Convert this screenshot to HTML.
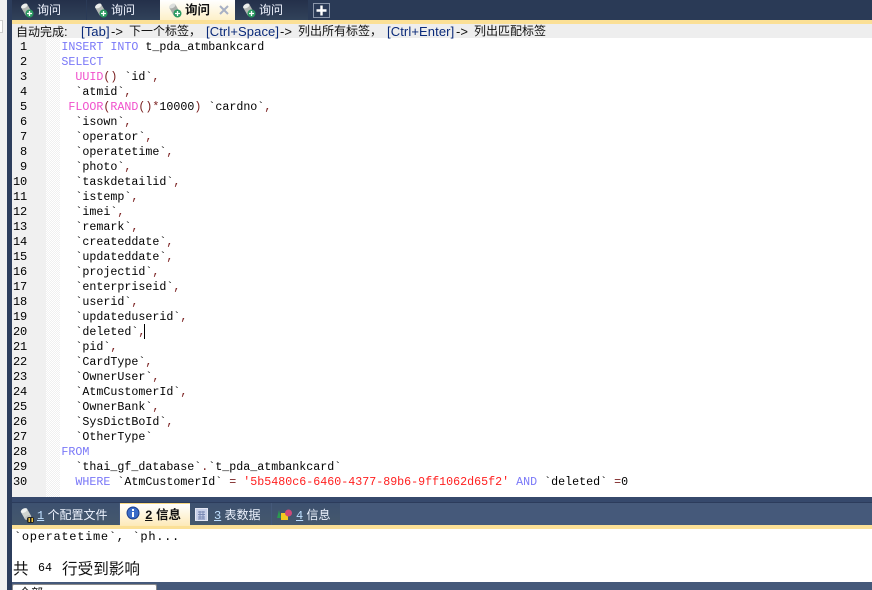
<!DOCTYPE html>
<html><head><meta charset="utf-8"><style>
html,body{margin:0;padding:0}
body{width:872px;height:590px;position:relative;overflow:hidden;background:#fff;font-family:"Liberation Sans","Noto Sans CJK SC",sans-serif}
div{position:absolute;box-sizing:border-box}
.t{white-space:pre;font-size:12px;line-height:16px}
.st{top:24px;white-space:pre;font-size:12px;line-height:15px;color:#111}
.l{font-size:13px;letter-spacing:.1px;color:#0a2a7a}
.d{font-size:13px;color:#111}
.n{left:0;width:27px;text-align:right;font:12px/15px "Liberation Mono",monospace;color:#000;height:15px;letter-spacing:-.2px}
.c{left:61.4px;font:11.67px/15px "Liberation Mono",monospace;color:#000;white-space:pre;height:15px}
.k{color:#7a78f8}.f{color:#f050cc}.p{color:#7a2020}.s{color:#ff1f1f}
.tab{top:0;height:20px;background:linear-gradient(#24304a,#31425a);}
.bt{top:503px;height:22px;background:linear-gradient(#3d5170,#45586c);}
svg{position:absolute}
</style></head><body>
<div style="left:0;top:0;width:7px;height:590px;background:#f0f0f0"></div>
<div style="left:0;top:20px;width:3px;height:13px;background:#fff;border:1px solid #ccc;border-left:0"></div>
<div style="left:7px;top:0;width:5px;height:590px;background:#2c3d5c"></div>
<div style="left:12px;top:0;width:860px;height:20px;background:#2a3a56"></div>
<div class="tab" style="left:12px;width:74px"></div>
<div class="tab" style="left:87px;width:73px"></div>
<div class="tab" style="left:235px;width:73px"></div>
<div style="left:160px;top:0;width:75px;height:20px;background:linear-gradient(#fff,#fdf0c8)"></div>
<svg style="left:20px;top:3px" width="15" height="15"><g transform="rotate(-30 6 6)"><rect x="2.500" y="2.500" width="7" height="8.500" fill="#b4b8b4"/><ellipse cx="6" cy="2.500" rx="3.500" ry="2" fill="#eceeec"/><ellipse cx="6" cy="11" rx="3.500" ry="2" fill="#a0a4a0"/></g><circle cx="9.500" cy="10.500" r="4" fill="#2a9a60"/><path d="M7 10.500h5M9.500 8v5" stroke="#fff" stroke-width="1.300"/></svg>
<svg style="left:94px;top:3px" width="15" height="15"><g transform="rotate(-30 6 6)"><rect x="2.500" y="2.500" width="7" height="8.500" fill="#b4b8b4"/><ellipse cx="6" cy="2.500" rx="3.500" ry="2" fill="#eceeec"/><ellipse cx="6" cy="11" rx="3.500" ry="2" fill="#a0a4a0"/></g><circle cx="9.500" cy="10.500" r="4" fill="#2a9a60"/><path d="M7 10.500h5M9.500 8v5" stroke="#fff" stroke-width="1.300"/></svg>
<svg style="left:168px;top:3px" width="15" height="15"><g transform="rotate(-30 6 6)"><rect x="2.500" y="2.500" width="7" height="8.500" fill="#a8aca8"/><ellipse cx="6" cy="2.500" rx="3.500" ry="2" fill="#dcdedc"/><ellipse cx="6" cy="11" rx="3.500" ry="2" fill="#909490"/></g><circle cx="9.500" cy="10.500" r="4" fill="#2a9a60"/><path d="M7 10.500h5M9.500 8v5" stroke="#fff" stroke-width="1.300"/></svg>
<svg style="left:242px;top:3px" width="15" height="15"><g transform="rotate(-30 6 6)"><rect x="2.500" y="2.500" width="7" height="8.500" fill="#b4b8b4"/><ellipse cx="6" cy="2.500" rx="3.500" ry="2" fill="#eceeec"/><ellipse cx="6" cy="11" rx="3.500" ry="2" fill="#a0a4a0"/></g><circle cx="9.500" cy="10.500" r="4" fill="#2a9a60"/><path d="M7 10.500h5M9.500 8v5" stroke="#fff" stroke-width="1.300"/></svg>
<div class="t" style="left:37px;top:2px;color:#f0f4ff">询问</div>
<div class="t" style="left:111px;top:2px;color:#f0f4ff">询问</div>
<div class="t" style="left:185px;top:2px;color:#111;font-weight:bold;font-size:12.5px">询问</div>
<div class="t" style="left:259px;top:2px;color:#f0f4ff">询问</div>
<svg style="left:218px;top:4px" width="12" height="12"><path d="M2 2L10 10M10 2L2 10" stroke="#a8b0c4" stroke-width="2"/></svg>
<div style="left:313px;top:3px;width:17px;height:15px;border:1px solid #8a96aa;background:#2a3a56"></div>
<svg style="left:314px;top:3px" width="15" height="15"><path d="M7.500 2.500v10M2.500 7.500h10" stroke="#fff" stroke-width="2.400"/></svg>

<div style="left:12px;top:20px;width:860px;height:4px;background:#fbe096"></div>
<div style="left:12px;top:24px;width:860px;height:14px;background:#eeeeee"></div>
<div class="st" style="left:16px">自动完成<span class="d">:</span></div>
<div class="st l" style="left:81px">[Tab]</div>
<div class="st d" style="left:111px">-&gt;</div>
<div class="st" style="left:129px">下一个标签，</div>
<div class="st l" style="left:206px">[Ctrl+Space]</div>
<div class="st d" style="left:280px">-&gt;</div>
<div class="st" style="left:298px">列出所有标签，</div>
<div class="st l" style="left:387px">[Ctrl+Enter]</div>
<div class="st d" style="left:456px">-&gt;</div>
<div class="st" style="left:474px">列出匹配标签</div>

<div style="left:12px;top:38px;width:34px;height:459px;background:#f0f0f0"></div>
<div style="left:46px;top:38px;width:14px;height:459px;background:#f6f6f6;background-image:repeating-conic-gradient(#f0f0f0 0 25%,#fff 0 50%);background-size:2px 2px"></div>

<div class="n" style="top:40px">1</div><div class="n" style="top:55px">2</div><div class="n" style="top:70px">3</div><div class="n" style="top:85px">4</div><div class="n" style="top:100px">5</div><div class="n" style="top:115px">6</div><div class="n" style="top:130px">7</div><div class="n" style="top:145px">8</div><div class="n" style="top:160px">9</div><div class="n" style="top:175px">10</div><div class="n" style="top:190px">11</div><div class="n" style="top:205px">12</div><div class="n" style="top:220px">13</div><div class="n" style="top:235px">14</div><div class="n" style="top:250px">15</div><div class="n" style="top:265px">16</div><div class="n" style="top:280px">17</div><div class="n" style="top:295px">18</div><div class="n" style="top:310px">19</div><div class="n" style="top:325px">20</div><div class="n" style="top:340px">21</div><div class="n" style="top:355px">22</div><div class="n" style="top:370px">23</div><div class="n" style="top:385px">24</div><div class="n" style="top:400px">25</div><div class="n" style="top:415px">26</div><div class="n" style="top:430px">27</div><div class="n" style="top:445px">28</div><div class="n" style="top:460px">29</div><div class="n" style="top:475px">30</div>

<div class="c" style="top:40px"><span class="k">INSERT INTO</span> t_pda_atmbankcard</div>
<div class="c" style="top:55px"><span class="k">SELECT</span></div>
<div class="c" style="top:70px">  <span class="f">UUID</span><span class="p">()</span> `id`<span class="p">,</span></div>
<div class="c" style="top:85px">  `atmid`<span class="p">,</span></div>
<div class="c" style="top:100px"> <span class="f">FLOOR</span><span class="p">(</span><span class="f">RAND</span><span class="p">()*</span>10000<span class="p">)</span> `cardno`<span class="p">,</span></div>
<div class="c" style="top:115px">  `isown`<span class="p">,</span></div>
<div class="c" style="top:130px">  `operator`<span class="p">,</span></div>
<div class="c" style="top:145px">  `operatetime`<span class="p">,</span></div>
<div class="c" style="top:160px">  `photo`<span class="p">,</span></div>
<div class="c" style="top:175px">  `taskdetailid`<span class="p">,</span></div>
<div class="c" style="top:190px">  `istemp`<span class="p">,</span></div>
<div class="c" style="top:205px">  `imei`<span class="p">,</span></div>
<div class="c" style="top:220px">  `remark`<span class="p">,</span></div>
<div class="c" style="top:235px">  `createddate`<span class="p">,</span></div>
<div class="c" style="top:250px">  `updateddate`<span class="p">,</span></div>
<div class="c" style="top:265px">  `projectid`<span class="p">,</span></div>
<div class="c" style="top:280px">  `enterpriseid`<span class="p">,</span></div>
<div class="c" style="top:295px">  `userid`<span class="p">,</span></div>
<div class="c" style="top:310px">  `updateduserid`<span class="p">,</span></div>
<div class="c" style="top:325px">  `deleted`<span class="p">,</span></div>
<div style="left:144px;top:324px;width:1px;height:15px;background:#000"></div>
<div class="c" style="top:340px">  `pid`<span class="p">,</span></div>
<div class="c" style="top:355px">  `CardType`<span class="p">,</span></div>
<div class="c" style="top:370px">  `OwnerUser`<span class="p">,</span></div>
<div class="c" style="top:385px">  `AtmCustomerId`<span class="p">,</span></div>
<div class="c" style="top:400px">  `OwnerBank`<span class="p">,</span></div>
<div class="c" style="top:415px">  `SysDictBoId`<span class="p">,</span></div>
<div class="c" style="top:430px">  `OtherType`</div>
<div class="c" style="top:445px"><span class="k">FROM</span></div>
<div class="c" style="top:460px">  `thai_gf_database`<span class="p">.</span>`t_pda_atmbankcard`</div>
<div class="c" style="top:475px">  <span class="k">WHERE</span> `AtmCustomerId` <span class="p">=</span> <span class="s">'5b5480c6-6460-4377-89b6-9ff1062d65f2'</span> <span class="k">AND</span> `deleted` <span class="p">=</span>0</div>

<div style="left:12px;top:497px;width:860px;height:93px;background:#45597a"></div>
<div style="left:12px;top:497px;width:860px;height:5px;background:#36496c"></div>
<div style="left:12px;top:502px;width:860px;height:1px;background:#2c3c5c"></div>
<div class="bt" style="left:12px;width:107px"></div>
<div class="bt" style="left:190px;width:81px"></div>
<div class="bt" style="left:272px;width:68px"></div>
<div style="left:120px;top:503px;width:70px;height:23px;background:linear-gradient(#fff,#fdeab8);border-top:1px solid #f8d880"></div>
<div style="left:12px;top:525px;width:860px;height:4px;background:#fbe096"></div>
<div style="left:120px;top:525px;width:70px;height:1px;background:#fdeab8"></div>
<div style="left:12px;top:529px;width:860px;height:53px;background:#fff"></div>

<svg style="left:19px;top:507px" width="18" height="18"><g transform="rotate(-30 7 7)"><rect x="3.500" y="3" width="7" height="8" fill="#d0d4d0"/><ellipse cx="7" cy="3" rx="3.500" ry="2" fill="#f0f2f0"/><ellipse cx="7" cy="11" rx="3.500" ry="2" fill="#c0c4c0"/></g><rect x="8" y="10" width="7" height="6" rx="2" fill="#222"/><rect x="9.500" y="11" width="1.500" height="4" fill="#e8c040"/><rect x="12.500" y="11" width="1.500" height="4" fill="#e8c040"/></svg>
<svg style="left:126px;top:506px" width="14" height="14"><circle cx="7" cy="7" r="6" fill="#3a6cc8"/><circle cx="7" cy="7" r="6" fill="none" stroke="#1a3c8a"/><rect x="6" y="6" width="2" height="5" fill="#fff"/><rect x="6" y="3" width="2" height="2" fill="#fff"/></svg>
<svg style="left:195px;top:508px" width="13" height="13"><rect x=".5" y=".5" width="12" height="12" fill="#c8d0e8" stroke="#e4e8f4"/><path d="M3 4h7M3 6.500h7M3 9h7M3 11h7M5 3v8M8 3v8" stroke="#7a8ab4"/></svg>
<svg style="left:277px;top:509px" width="16" height="13"><path d="M0 9L2 1L4 9Z" fill="#2a9a50"/><rect x="4" y="4" width="7" height="7" fill="#f4c820"/><circle cx="11.500" cy="4" r="3.500" fill="#d04878"/></svg>

<div class="t" style="left:37px;top:507px;color:#eef4ff"><u style="color:#bfe0ff;font-family:'Liberation Mono',monospace">1</u> 个配置文件</div>
<div class="t" style="left:145px;top:507px;color:#111;font-weight:bold;font-size:12.5px"><u style="font-family:'Liberation Mono',monospace">2</u> 信息</div>
<div class="t" style="left:214px;top:507px;color:#eef4ff"><u style="color:#bfe0ff;font-family:'Liberation Mono',monospace">3</u> 表数据</div>
<div class="t" style="left:296px;top:507px;color:#eef4ff"><u style="color:#bfe0ff;font-family:'Liberation Mono',monospace">4</u> 信息</div>

<div style="left:14px;top:530px;font:12px/15px 'Liberation Mono',monospace;letter-spacing:.7px;color:#000;white-space:pre">`operatetime`, `ph...</div>
<div style="left:13px;top:560px;font:15.5px/16px 'Noto Sans CJK SC',sans-serif;color:#111;white-space:pre">共</div>
<div style="left:38px;top:561px;font:11.67px/15px 'Liberation Mono',monospace;color:#000;white-space:pre">64</div>
<div style="left:62px;top:560px;font:15.6px/16px 'Noto Sans CJK SC',sans-serif;color:#111;white-space:pre">行受到影响</div>

<div style="left:12px;top:584px;width:145px;height:6px;background:#fff;border:1px solid #8a8a8a;border-bottom:0;border-radius:2px 2px 0 0;overflow:hidden"></div>
<div style="left:19px;top:586px;font-size:12px;line-height:15px;color:#111;height:4px;overflow:hidden;white-space:pre">全部</div>
</body></html>
